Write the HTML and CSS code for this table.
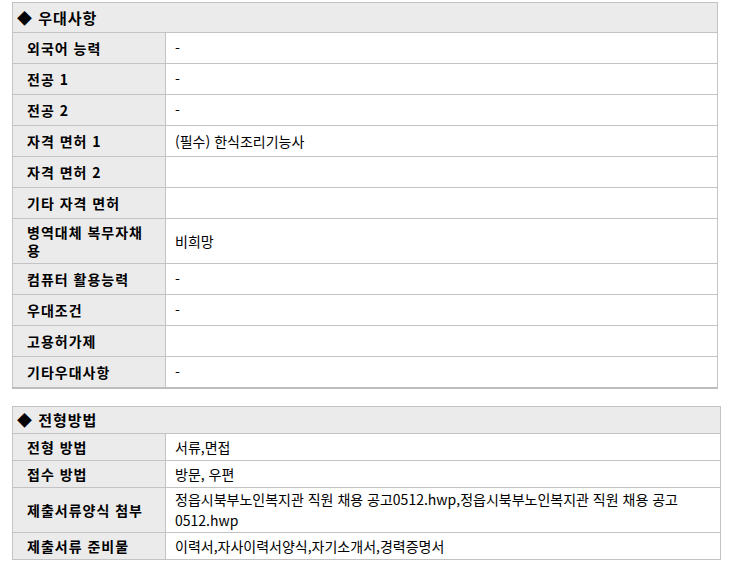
FILE: index.html
```html
<!DOCTYPE html>
<html lang="ko">
<head>
<meta charset="utf-8">
<title>우대사항 / 전형방법</title>
<link rel="stylesheet" href="styles.css">
</head>
<body>
<div class="page">
  <table class="info info-pref">
    <colgroup><col class="col-label"><col class="col-value"></colgroup>
    <tr class="title-row"><th colspan="2" class="title">◆ 우대사항</th></tr>
    <tr><th class="label">외국어 능력</th><td class="value">-</td></tr>
    <tr><th class="label">전공 1</th><td class="value">-</td></tr>
    <tr><th class="label">전공 2</th><td class="value">-</td></tr>
    <tr><th class="label">자격 면허 1</th><td class="value">(필수) 한식조리기능사</td></tr>
    <tr><th class="label">자격 면허 2</th><td class="value"></td></tr>
    <tr><th class="label">기타 자격 면허</th><td class="value"></td></tr>
    <tr><th class="label">병역대체 복무자채용</th><td class="value">비희망</td></tr>
    <tr><th class="label">컴퓨터 활용능력</th><td class="value">-</td></tr>
    <tr><th class="label">우대조건</th><td class="value">-</td></tr>
    <tr><th class="label">고용허가제</th><td class="value"></td></tr>
    <tr><th class="label">기타우대사항</th><td class="value">-</td></tr>
  </table>

  <table class="info info-select">
    <colgroup><col class="col-label"><col class="col-value"></colgroup>
    <tr class="title-row"><th colspan="2" class="title">◆ 전형방법</th></tr>
    <tr><th class="label">전형 방법</th><td class="value">서류,면접</td></tr>
    <tr><th class="label">접수 방법</th><td class="value">방문, 우편</td></tr>
    <tr><th class="label">제출서류양식 첨부</th><td class="value">정읍시북부노인복지관 직원 채용 공고0512.hwp,정읍시북부노인복지관 직원 채용 공고0512.hwp</td></tr>
    <tr><th class="label">제출서류 준비물</th><td class="value">이력서,자사이력서양식,자기소개서,경력증명서</td></tr>
  </table>
</div>
</body>
</html>
```

FILE: styles.css
```css
html, body {
  margin: 0;
  padding: 0;
  background: #ffffff;
}

.page {
  padding: 2px 0 0 12px;
  font-family: "Noto Sans CJK KR", "Noto Sans", sans-serif;
  font-size: 14px;
  color: #000000;
}

.info {
  border-collapse: collapse;
  table-layout: fixed;
}

.col-label {
  width: 153px;
}

.info th,
.info td {
  border: 1px solid #c3c3c3;
  line-height: 18px;
  vertical-align: middle;
  text-align: left;
}

.info-pref {
  width: 706px;
  border-bottom: 2px solid #bdbdbd;
}

.info-select {
  width: 709px;
  margin-top: 17px;
}

.title {
  background: #ebebeb;
  font-size: 15px;
  font-weight: bold;
  letter-spacing: 1px;
  padding: 0 4px;
}

.info-pref .title {
  height: 29px;
}

.info-select .title {
  height: 26px;
}

.label {
  background: #ebebeb;
  font-size: 14px;
  font-weight: bold;
  letter-spacing: 1px;
  padding: 4px 14px;
}

.value {
  padding: 4px 9px;
  font-size: 14px;
  font-weight: normal;
}

.info-pref .label,
.info-pref .value {
  height: 22px;
}

.info-select .value {
  line-height: 21px;
  padding: 1px 9px;
}
```
